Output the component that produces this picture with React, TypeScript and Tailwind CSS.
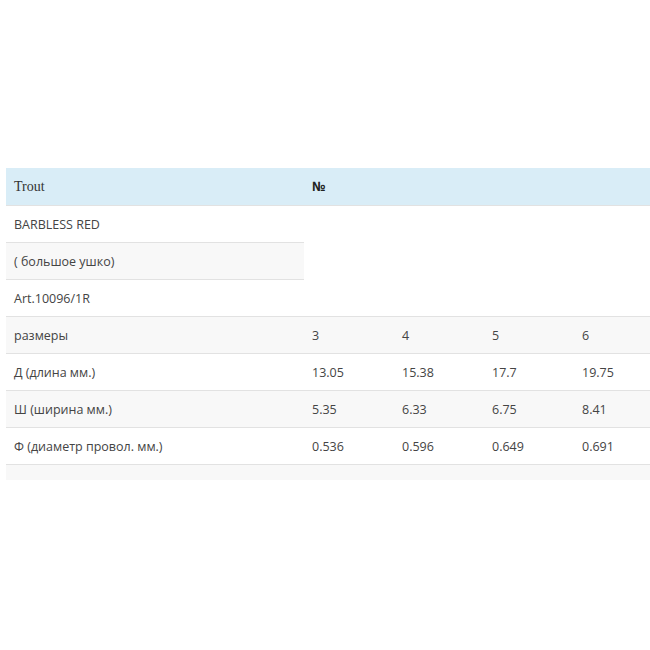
export default function App() {
  const rows = [
    ['размеры', '3', '4', '5', '6'],
    ['Д (длина мм.)', '13.05', '15.38', '17.7', '19.75'],
    ['Ш (ширина мм.)', '5.35', '6.33', '6.75', '8.41'],
    ['Ф (диаметр провол. мм.)', '0.536', '0.596', '0.649', '0.691'],
  ];

  return (
    <div className="min-h-[650px] w-[650px] bg-white pt-[168px] pl-[6px] overflow-hidden" style={{ fontFamily: '"Open Sans", "Noto Sans", sans-serif' }}>
      <table className="w-[644px] border-collapse text-[12.5px] text-[#444] table-fixed">
        <colgroup>
          <col className="w-[298px]" />
          <col className="w-[90px]" />
          <col className="w-[90px]" />
          <col className="w-[90px]" />
          <col className="w-[76px]" />
        </colgroup>
        <thead>
          <tr className="h-[37px] bg-[#d9edf7]">
            <th className="px-[8px] text-left font-normal text-[14px] text-[#333]" style={{ fontFamily: '"Liberation Serif", serif' }}>
              Trout
            </th>
            <th colSpan={4} className="px-[8px] text-left font-bold text-[13px] text-[#222]">
              №
            </th>
          </tr>
        </thead>
        <tbody>
          <tr className="h-[37px]">
            <td className="px-[8px] pt-[3px] border-t border-[#e2e2e2]">BARBLESS RED</td>
            <td colSpan={4} rowSpan={3} className="border-t border-[#e2e2e2]"></td>
          </tr>
          <tr className="h-[37px]">
            <td className="px-[8px] pt-[3px] border-t border-[#e2e2e2] bg-[#f8f8f8]">( большое ушко)</td>
          </tr>
          <tr className="h-[37px]">
            <td className="px-[8px] pt-[3px] border-t border-[#e2e2e2]">Art.10096/1R</td>
          </tr>
          {rows.map((r, i) => (
            <tr key={i} className={`h-[37px] ${i % 2 === 0 ? 'bg-[#f8f8f8]' : 'bg-white'}`}>
              {r.map((c, j) => (
                <td key={j} className="px-[8px] pt-[3px] border-t border-[#e2e2e2]">{c}</td>
              ))}
            </tr>
          ))}
          <tr className="h-[16px] bg-[#f8f8f8]">
            <td colSpan={5} className="border-t border-[#e2e2e2]"></td>
          </tr>
        </tbody>
      </table>
    </div>
  );
}
